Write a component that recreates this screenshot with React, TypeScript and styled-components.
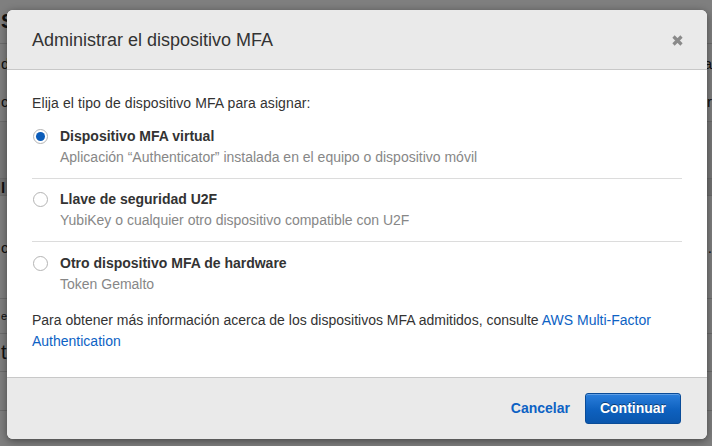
import React from 'react';
import styled, { createGlobalStyle } from 'styled-components';

const Global = createGlobalStyle`
  html, body { margin: 0; padding: 0; }
  body {
    font-family: "Liberation Sans", Arial, Helvetica, sans-serif;
    width: 712px;
    height: 446px;
    overflow: hidden;
    background: #fff;
  }
`;

const Page = styled.div`
  position: relative;
  width: 712px;
  height: 446px;
  overflow: hidden;
  background: #fff;
`;

const BgRow = styled.div<{ $h: number; $shade?: string }>`
  height: ${(p) => p.$h}px;
  box-sizing: border-box;
  border-bottom: 1px solid #d8d8d8;
  background: ${(p) => p.$shade || '#fff'};
  display: flex;
  flex-direction: column;
  justify-content: space-around;
  font-size: 15px;
  color: #222;
`;

const BgLine = styled.div<{ $bold?: boolean; $size?: number }>`
  display: flex;
  justify-content: space-between;
  font-weight: ${(p) => (p.$bold ? 700 : 400)};
  font-size: ${(p) => p.$size || 15}px;
  padding: 0 0 0 1px;
`;

const Overlay = styled.div`
  position: absolute;
  inset: 0;
  background: rgba(0, 0, 0, 0.5);
`;

const Modal = styled.div`
  position: absolute;
  left: 7px;
  top: 10px;
  width: 700px;
  border-radius: 6px;
  overflow: hidden;
  background: #fff;
  box-shadow: 0 2px 8px rgba(0, 0, 0, 0.45);
  display: flex;
  flex-direction: column;
`;

const Header = styled.div`
  height: 59px;
  background: #eaeaea;
  border-bottom: 1px solid #c8c8c8;
  display: flex;
  align-items: center;
  justify-content: space-between;
  padding: 0 24px 0 25px;
`;

const Title = styled.h2`
  margin: 0;
  font-size: 18px;
  font-weight: 400;
  color: #333;
  padding-top: 1px;
`;

const CloseButton = styled.button`
  border: 0;
  background: none;
  padding: 0;
  width: 11px;
  height: 11px;
  display: flex;
  cursor: pointer;
  margin-top: 1px;
`;

const Body = styled.div`
  padding: 23px 25px 25px;
  font-size: 14px;
  line-height: 21px;
  color: #333;
`;

const Intro = styled.p`
  margin: 0 0 2px;
  letter-spacing: 0.1px;
`;

const OptionList = styled.div`
  display: flex;
  flex-direction: column;
`;

const Option = styled.label`
  display: flex;
  align-items: flex-start;
  gap: 12px;
  padding: 10px 0;
  border-bottom: 1px solid #dcdcdc;
  cursor: pointer;
  &:last-child {
    border-bottom: 0;
    padding-top: 11px;
  }
`;

const Radio = styled.span<{ $checked?: boolean }>`
  box-sizing: border-box;
  width: 15px;
  height: 15px;
  margin: 3px 0 0 1px;
  border-radius: 50%;
  border: 1px solid #b4b4b4;
  background: #fff;
  display: flex;
  align-items: center;
  justify-content: center;
  flex-shrink: 0;
  &::after {
    content: '';
    width: 9px;
    height: 9px;
    border-radius: 50%;
    background: ${(p) => (p.$checked ? '#0b5cb9' : 'transparent')};
  }
`;

const OptionText = styled.div`
  display: flex;
  flex-direction: column;
`;

const OptionTitle = styled.span`
  font-weight: 700;
  color: #333;
`;

const OptionDesc = styled.span`
  color: #878787;
`;

const Info = styled.p`
  margin: 5px 0 0;
`;

const Link = styled.a`
  color: #0d62c4;
  text-decoration: none;
`;

const Footer = styled.div`
  height: 60px;
  background: #eaeaea;
  border-top: 1px solid #c8c8c8;
  display: flex;
  align-items: center;
  justify-content: flex-end;
  gap: 15px;
  padding: 0 26px 1px 0;
`;

const TextButton = styled.button`
  border: 0;
  background: none;
  padding: 0;
  font-family: inherit;
  font-size: 14px;
  font-weight: 700;
  color: #0d62c4;
  cursor: pointer;
`;

const PrimaryButton = styled.button`
  box-sizing: border-box;
  height: 31px;
  width: 96px;
  border: 1px solid #0a4c98;
  border-radius: 3px;
  background: linear-gradient(to bottom, #2b7fdc 0%, #0e61bf 55%, #0a56ad 100%);
  color: #fff;
  font-family: inherit;
  font-size: 14px;
  font-weight: 700;
  text-shadow: 0 -1px 0 rgba(0, 0, 0, 0.45);
  box-shadow: inset 0 1px 0 rgba(255, 255, 255, 0.25);
  cursor: pointer;
`;

const CloseIcon = () => (
  <svg width="11" height="11" viewBox="0 0 11 11">
    <path d="M1.5 1.5 L9.5 9.5 M9.5 1.5 L1.5 9.5" stroke="#8a8a8a" strokeWidth="3.2" strokeLinecap="butt" />
  </svg>
);

const options = [
  {
    title: 'Dispositivo MFA virtual',
    desc: 'Aplicación “Authenticator” instalada en el equipo o dispositivo móvil',
    checked: true,
  },
  {
    title: 'Llave de seguridad U2F',
    desc: 'YubiKey o cualquier otro dispositivo compatible con U2F',
    checked: false,
  },
  {
    title: 'Otro dispositivo MFA de hardware',
    desc: 'Token Gemalto',
    checked: false,
  },
];

export default function App() {
  return (
    <Page>
      <Global />
      <div aria-hidden="true">
        <BgRow $h={44}>
          <BgLine $bold $size={20}>
            <span>S</span>
          </BgLine>
        </BgRow>
        <BgRow $h={78}>
          <BgLine>
            <span>d</span>
            <span>a</span>
          </BgLine>
          <BgLine>
            <span>c</span>
            <span>er</span>
          </BgLine>
        </BgRow>
        <BgRow $h={57} $shade="#f3f3f3" />
        <BgRow $h={17} $shade="#e6e6e6">
          <BgLine $bold>
            <span>l</span>
          </BgLine>
        </BgRow>
        <BgRow $h={103}>
          <BgLine>
            <span>c</span>
            <span>.</span>
          </BgLine>
        </BgRow>
        <BgRow $h={35}>
          <BgLine $size={11}>
            <span>e</span>
          </BgLine>
        </BgRow>
        <BgRow $h={38}>
          <BgLine $size={20}>
            <span>t</span>
          </BgLine>
        </BgRow>
        <BgRow $h={39} />
        <BgRow $h={36} />
      </div>
      <Overlay />
      <Modal role="dialog" aria-label="Administrar el dispositivo MFA">
        <Header>
          <Title>Administrar el dispositivo MFA</Title>
          <CloseButton aria-label="Cerrar">
            <CloseIcon />
          </CloseButton>
        </Header>
        <Body>
          <Intro>Elija el tipo de dispositivo MFA para asignar:</Intro>
          <OptionList>
            {options.map((o) => (
              <Option key={o.title}>
                <Radio $checked={o.checked} />
                <OptionText>
                  <OptionTitle>{o.title}</OptionTitle>
                  <OptionDesc>{o.desc}</OptionDesc>
                </OptionText>
              </Option>
            ))}
          </OptionList>
          <Info>
            Para obtener más información acerca de los dispositivos MFA admitidos, consulte{' '}
            <Link href="#">AWS Multi-Factor Authentication</Link>
          </Info>
        </Body>
        <Footer>
          <TextButton>Cancelar</TextButton>
          <PrimaryButton>Continuar</PrimaryButton>
        </Footer>
      </Modal>
    </Page>
  );
}
